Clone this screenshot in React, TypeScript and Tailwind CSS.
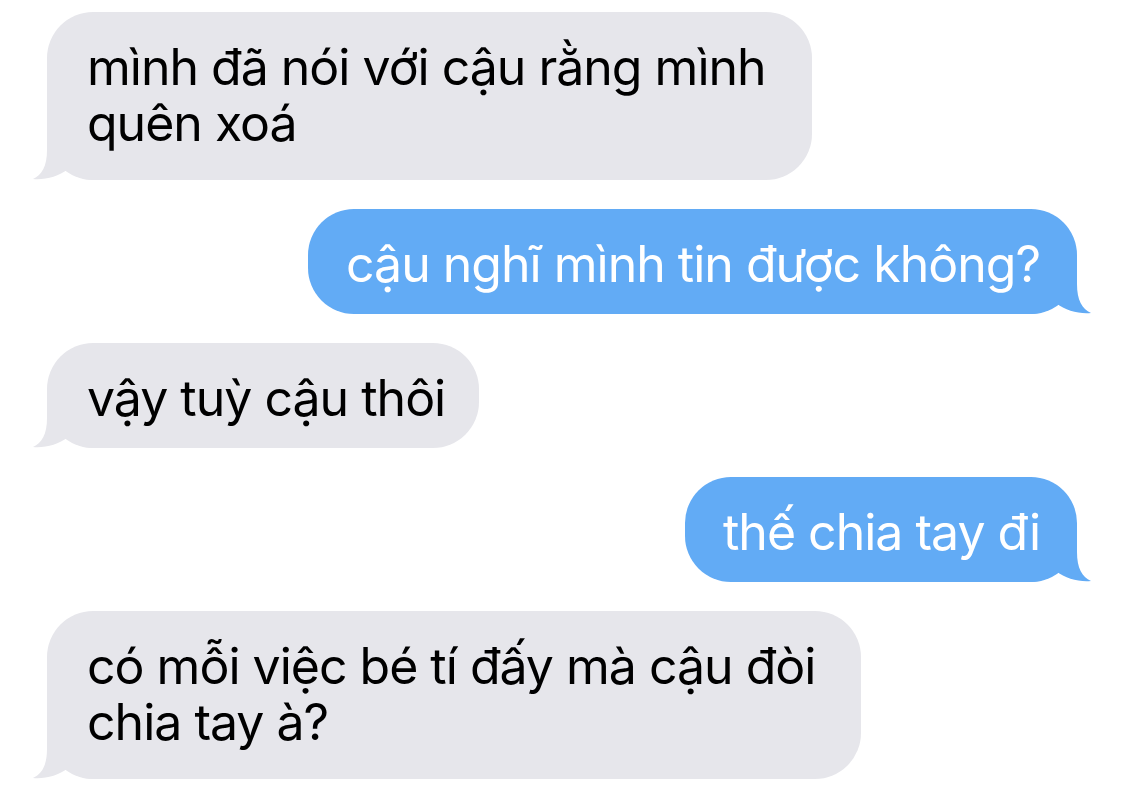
type Side = "them" | "me"

type Msg = { side: Side; lines: string[] }

const messages: Msg[] = [
  { side: "them", lines: ["mình đã nói với cậu rằng mình", "quên xoá"] },
  { side: "me", lines: ["cậu nghĩ mình tin được không?"] },
  { side: "them", lines: ["vậy tuỳ cậu thôi"] },
  { side: "me", lines: ["thế chia tay đi"] },
  { side: "them", lines: ["có mỗi việc bé tí đấy mà cậu đòi", "chia tay à?"] },
]

function Tail({ side, color }: { side: Side; color: string }) {
  // drawn for the left side, mirrored for the right one
  return (
    <svg
      width="70"
      height="54"
      viewBox="-20 -52 70 54"
      className={
        side === "them"
          ? "absolute -bottom-[2px] -left-[20px]"
          : "absolute -bottom-[2px] -right-[20px] -scale-x-100"
      }
    >
      <path
        d="M0,-52 L0,-30 C0,-14 -5,-5 -14,-1 C-2,0 11,-3 21,-11 C28,-4 36,0 46,0 L50,0 L50,-52 Z"
        fill={color}
      />
    </svg>
  )
}

function Bubble({ msg }: { msg: Msg }) {
  const me = msg.side === "me"
  const multi = msg.lines.length > 1
  const color = me ? "#62abf5" : "#e6e6eb"
  return (
    <div className={me ? "flex justify-end" : "flex justify-start"}>
      <div
        className={
          "relative whitespace-nowrap rounded-[46px] text-[50px] leading-[56px] tracking-[-0.02em] " +
          (me
            ? "bg-[#62abf5] text-white pl-[38px] pr-[37px]"
            : "bg-[#e6e6eb] text-black pl-10 " + (multi ? "pr-[46px]" : "pr-[34px]")) +
          (multi ? " pt-[27px] pb-[29px]" : " pt-[27px] pb-[22px]")
        }
      >
        <Tail side={msg.side} color={color} />
        <p className="relative">
          {msg.lines.map((l, i) => (
            <span key={i}>
              {i > 0 && <br />}
              {l}
            </span>
          ))}
        </p>
      </div>
    </div>
  )
}

export default function App() {
  return (
    <div
      className="min-h-screen w-[1125px] bg-white pl-[47px] pr-[48px] pt-3"
      style={{ fontFamily: "Inter, 'Noto Sans', sans-serif" }}
    >
      <div className="flex flex-col gap-[29px]">
        {messages.map((m, i) => (
          <Bubble key={i} msg={m} />
        ))}
      </div>
    </div>
  )
}
